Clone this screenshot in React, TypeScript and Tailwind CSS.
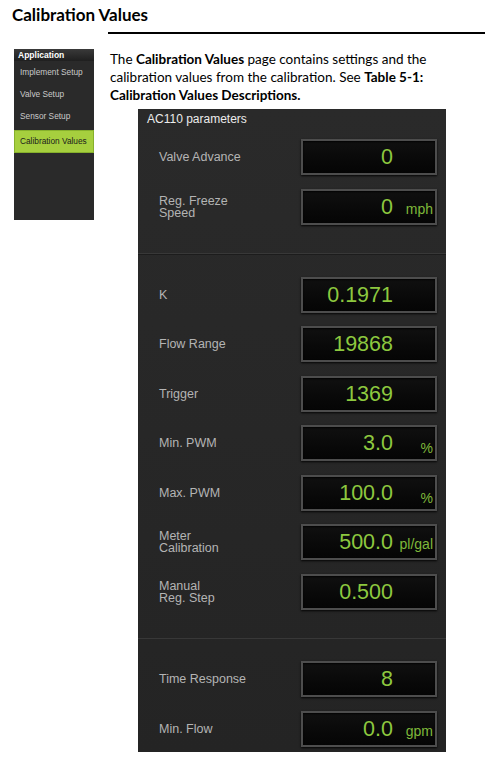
type Param = {
  label: string[];
  value: string;
  unit?: string;
};

const groups: Param[][] = [
  [
    { label: ["Valve Advance"], value: "0" },
    { label: ["Reg. Freeze", "Speed"], value: "0", unit: "mph" },
  ],
  [
    { label: ["K"], value: "0.1971" },
    { label: ["Flow Range"], value: "19868" },
    { label: ["Trigger"], value: "1369" },
    { label: ["Min. PWM"], value: "3.0", unit: "%" },
    { label: ["Max. PWM"], value: "100.0", unit: "%" },
    { label: ["Meter", "Calibration"], value: "500.0", unit: "pl/gal" },
    { label: ["Manual", "Reg. Step"], value: "0.500" },
  ],
  [
    { label: ["Time Response"], value: "8" },
    { label: ["Min. Flow"], value: "0.0", unit: "gpm" },
  ],
];

const menu = ["Implement Setup", "Valve Setup", "Sensor Setup"];

const Row = ({ p, tall }: { p: Param; tall?: boolean }) => (
  <div className={`flex items-center ${tall ? "h-[50px]" : "h-[49.5px]"}`}>
    <div className="flex-1 pl-[21px] text-[12.5px] leading-[12px] text-[#b4b4b4]">
      {p.label.map((l) => (
        <div key={l}>{l}</div>
      ))}
    </div>
    <div className="mr-[9px] flex h-[36px] w-[136px] items-baseline border-2 border-[#4d4d4d] bg-gradient-to-b from-[#101010] to-[#050505] pt-[5px] shadow-[0_1px_2px_rgba(0,0,0,0.9),inset_0_1px_2px_rgba(0,0,0,0.9)]">
      <span className="w-[90px] text-right text-[21.5px] leading-[22px] text-[#8dc83f]">{p.value}</span>
      {p.unit && (
        <span
          className={`flex-1 pr-[2px] text-right text-[14px] text-[#7fb83a] ${p.unit === "%" ? "translate-y-[3px]" : ""}`}
        >
          {p.unit}
        </span>
      )}
    </div>
  </div>
);

export default function App() {
  return (
    <div className="relative h-[760px] w-[492px] bg-white font-['Lato',sans-serif] text-black">
      <h1 className="pl-[12px] pt-[5px] text-[17px] font-bold leading-[20px]">Calibration Values</h1>
      <div className="ml-[108px] mr-[7px] mt-[7px] h-[2px] bg-black" />

      <div className="mt-[15px] flex pl-[14px]">
        {/* side menu */}
        <div className="h-[171px] w-[80px] shrink-0 bg-[#2a2a2a] font-['Liberation_Sans',sans-serif]">
          <div className="h-[12px] bg-gradient-to-b from-[#3a3a3a] to-[#1f1f1f] pl-[4px] text-[8.5px] font-bold leading-[12px] text-white">
            Application
          </div>
          {menu.map((m) => (
            <div key={m} className="flex h-[22px] items-center pl-[6px] text-[8.3px] text-[#c9c9c9]">
              {m}
            </div>
          ))}
          <div className="mt-[3px] flex h-[23px] items-center border border-[#86b02c] bg-[#a6cf3e] pl-[5px] text-[8.3px] text-[#1c1c1c]">
            Calibration Values
          </div>
        </div>

        <div className="ml-[16px] flex-1">
          <p className="mt-[1px] w-[340px] text-[13.5px] leading-[18px]">
            The <b>Calibration Values</b> page contains settings and the calibration values from the calibration. See{" "}
            <b>Table 5-1: Calibration Values Descriptions.</b>
          </p>

          {/* parameter panel */}
          <div className="ml-[28px] mt-[5px] h-[643px] w-[308px] overflow-hidden bg-gradient-to-b from-[#2a2a2a] via-[#272727] to-[#242424] font-['Liberation_Sans',sans-serif]">
            <div className="h-[20px] pl-[9px] text-[12px] leading-[20px] text-[#ececec]">AC110 parameters</div>
            {groups.map((g, i) => (
              <div
                key={i}
                className={
                  i === 0
                    ? "pb-[21px] pt-[3px]"
                    : i === 1
                      ? "border-t border-[#383838] pb-[21px] pt-[16px] shadow-[inset_0_1px_0_#1c1c1c]"
                      : "border-t border-[#383838] pt-[16px]"
                }
              >
                {g.map((p) => (
                  <Row key={p.label.join(" ")} p={p} tall={i === 0} />
                ))}
              </div>
            ))}
          </div>
        </div>
      </div>
    </div>
  );
}
